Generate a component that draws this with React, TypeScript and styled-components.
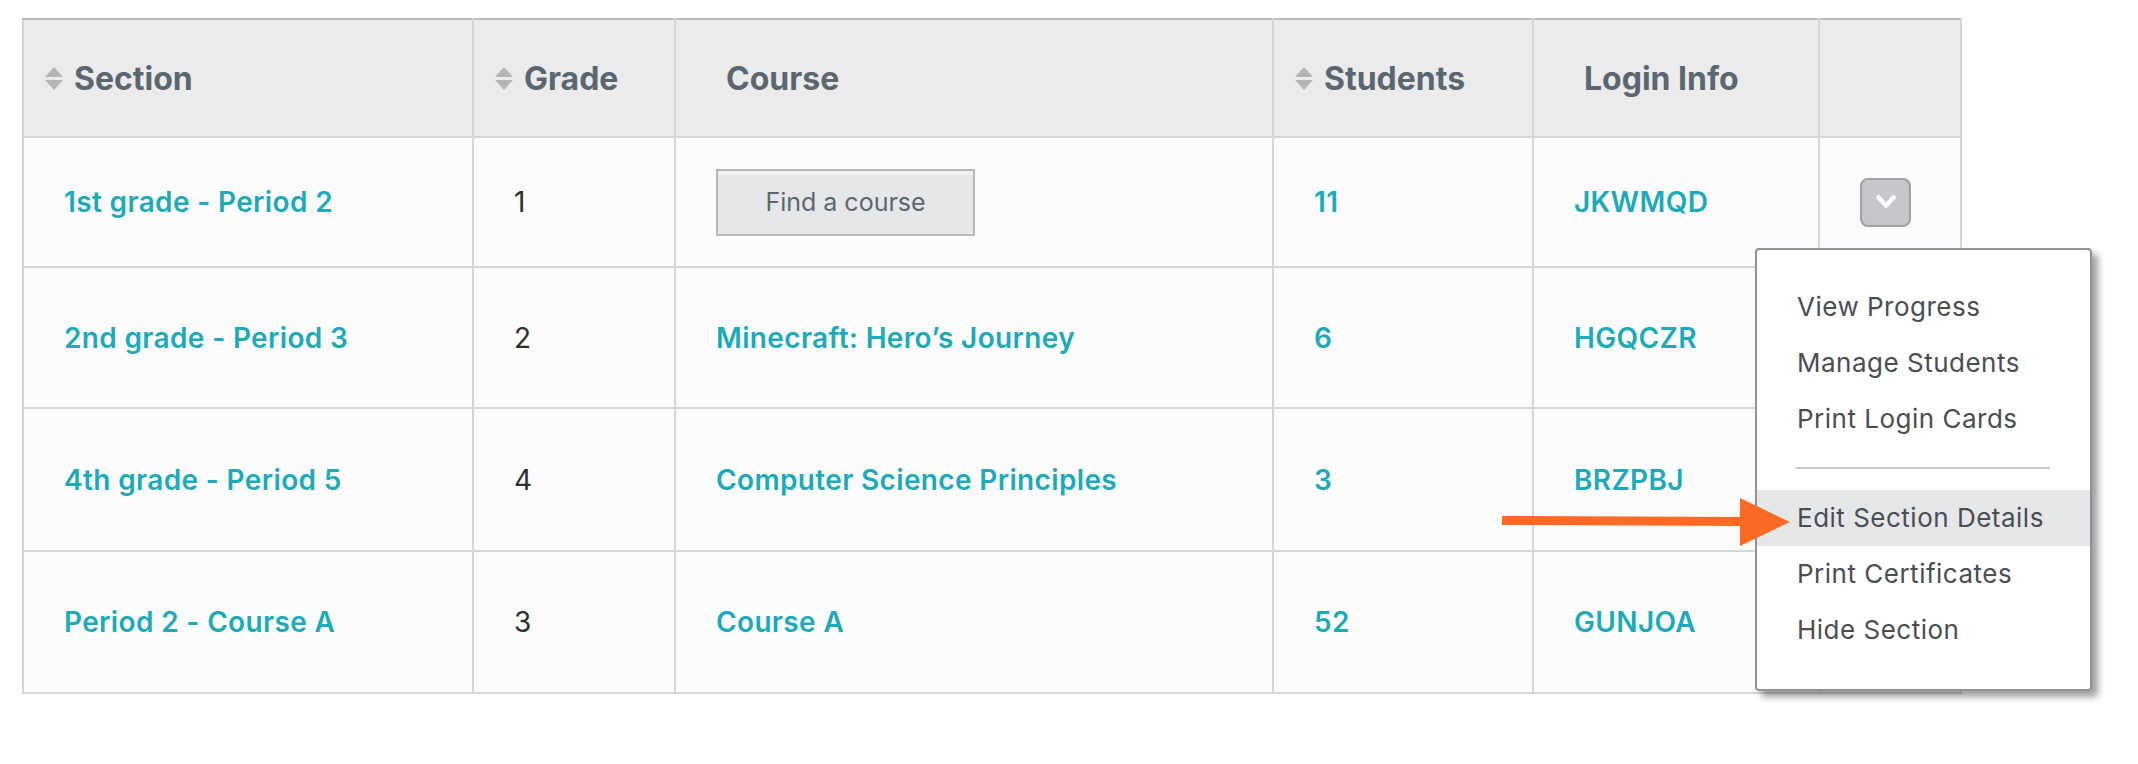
import React from 'react';
import styled, { createGlobalStyle } from 'styled-components';

const GlobalStyle = createGlobalStyle`
  html, body {
    margin: 0;
    padding: 0;
    background: #ffffff;
  }
  body {
    font-family: Inter, "Noto Sans", "Liberation Sans", sans-serif;
  }
`;

const Page = styled.div`
  position: relative;
  padding: 18px 22px;
  width: 2138px;
  height: 764px;
  box-sizing: border-box;
`;

const Table = styled.table`
  border-collapse: collapse;
  table-layout: fixed;
  width: 1938px;
  background: #fcfcfc;
  border-top: 2px solid #bdbdbd;
  border-left: 2px solid #bdbdbd;
`;

const Col = styled.col<{ $w: number }>`
  width: ${p => p.$w}px;
`;

const HeadRow = styled.tr`
  height: 118px;
  background: #ebebeb;
`;

const Th = styled.th<{ $sortable?: boolean }>`
  border: 2px solid #d6d6d6;
  border-top-color: #bdbdbd;
  padding: 0 0 0 ${p => (p.$sortable ? 21 : 50)}px;
  text-align: left;
  vertical-align: middle;
`;

const HeadInner = styled.div`
  display: flex;
  align-items: center;
  gap: 11px;
  font-size: 32px;
  font-weight: 700;
  color: #5b6770;
  letter-spacing: 0;
`;

const Row = styled.tr<{ $h: number }>`
  height: ${p => p.$h}px;
`;

const Td = styled.td`
  border: 2px solid #d6d6d6;
  padding: 0 0 0 40px;
  vertical-align: middle;
  font-size: 28px;
  color: #2e2e2e;
  white-space: nowrap;
`;

const Link = styled.a`
  color: #1daab9;
  font-weight: 600;
  letter-spacing: 0.35px;
  text-decoration: none;
  cursor: pointer;
`;

const FindButton = styled.button`
  width: 259px;
  height: 67px;
  background: #e6e7e9;
  border: 2px solid #b8b8b8;
  box-shadow: inset 0 4px 0 #f1f1f2;
  font-family: inherit;
  font-size: 25px;
  color: #5b6770;
  padding: 0;
  cursor: pointer;
`;

const ActionWrap = styled.div`
  position: relative;
  display: inline-block;
  vertical-align: middle;
`;

const ChevronButton = styled.button`
  width: 51px;
  height: 49px;
  background: #c5c7ca;
  border: 2px solid #9ea2a6;
  border-radius: 8px;
  padding: 0;
  display: flex;
  align-items: center;
  justify-content: center;
  cursor: pointer;
`;

const Menu = styled.div`
  position: absolute;
  top: calc(100% + 21px);
  left: -105px;
  width: 337px;
  box-sizing: border-box;
  padding: 29px 0 31px;
  background: #ffffff;
  border: 2px solid #8e9399;
  border-radius: 4px;
  box-shadow: 6px 6px 7px rgba(0, 0, 0, 0.38);
  z-index: 2;
`;

const MenuItem = styled.div<{ $active?: boolean }>`
  height: 56px;
  display: flex;
  align-items: center;
  padding-left: 40px;
  font-size: 26px;
  letter-spacing: 0.5px;
  color: #4a4e53;
  background: ${p => (p.$active ? '#e6e7e9' : 'transparent')};
  cursor: pointer;
`;

const Divider = styled.div`
  height: 2px;
  margin: 20px 40px 21px 39px;
  background: #c6c8cc;
`;

const Arrow = styled.svg`
  position: absolute;
  left: 1502px;
  top: 496px;
  z-index: 3;
`;

const SortIcon = () => (
  <svg width="18" height="23" viewBox="0 0 18 23">
    <polygon points="9,0 18,10 0,10" fill="#b5b5b5" />
    <polygon points="0,13 18,13 9,23" fill="#b5b5b5" />
  </svg>
);

const ChevronDown = () => (
  <svg width="20" height="14" viewBox="0 0 20 14">
    <polyline points="2.5,2.5 10,10.5 17.5,2.5" fill="none" stroke="#ffffff" strokeWidth="4.5" strokeLinecap="round" strokeLinejoin="round" />
  </svg>
);

type Section = {
  name: string;
  grade: string;
  course: string | null;
  students: string;
  code: string;
  h: number;
};

const sections: Section[] = [
  { name: '1st grade - Period 2', grade: '1', course: null, students: '11', code: 'JKWMQD', h: 130 },
  { name: '2nd grade - Period 3', grade: '2', course: 'Minecraft: Hero\u2019s Journey', students: '6', code: 'HGQCZR', h: 141 },
  { name: '4th grade - Period 5', grade: '4', course: 'Computer Science Principles', students: '3', code: 'BRZPBJ', h: 143 },
  { name: 'Period 2 - Course A', grade: '3', course: 'Course A', students: '52', code: 'GUNJOA', h: 142 },
];

const menuItems = ['View Progress', 'Manage Students', 'Print Login Cards'];
const menuItems2 = ['Edit Section Details', 'Print Certificates', 'Hide Section'];

export default function App() {
  return (
    <Page>
      <GlobalStyle />
      <Table>
        <colgroup>
          <Col $w={450} />
          <Col $w={202} />
          <Col $w={598} />
          <Col $w={260} />
          <Col $w={286} />
          <Col $w={142} />
        </colgroup>
        <thead>
          <HeadRow>
            <Th $sortable><HeadInner><SortIcon />Section</HeadInner></Th>
            <Th $sortable><HeadInner><SortIcon />Grade</HeadInner></Th>
            <Th><HeadInner>Course</HeadInner></Th>
            <Th $sortable><HeadInner><SortIcon />Students</HeadInner></Th>
            <Th><HeadInner>Login Info</HeadInner></Th>
            <Th />
          </HeadRow>
        </thead>
        <tbody>
          {sections.map((s, i) => (
            <Row key={s.code} $h={s.h}>
              <Td><Link>{s.name}</Link></Td>
              <Td>{s.grade}</Td>
              <Td>
                {s.course ? <Link>{s.course}</Link> : <FindButton>Find a course</FindButton>}
              </Td>
              <Td><Link>{s.students}</Link></Td>
              <Td><Link>{s.code}</Link></Td>
              <Td>
                {i === 0 && (
                  <ActionWrap>
                    <ChevronButton><ChevronDown /></ChevronButton>
                    <Menu>
                      {menuItems.map(m => <MenuItem key={m}>{m}</MenuItem>)}
                      <Divider />
                      {menuItems2.map((m, j) => <MenuItem key={m} $active={j === 0}>{m}</MenuItem>)}
                    </Menu>
                  </ActionWrap>
                )}
              </Td>
            </Row>
          ))}
        </tbody>
      </Table>
      <Arrow width="290" height="52" viewBox="0 0 290 52">
        <polygon points="0,20 240,21 240,30 0,29" fill="#fd6a24" />
        <polygon points="238,2 288,26 238,50" fill="#fd6a24" />
      </Arrow>
    </Page>
  );
}
